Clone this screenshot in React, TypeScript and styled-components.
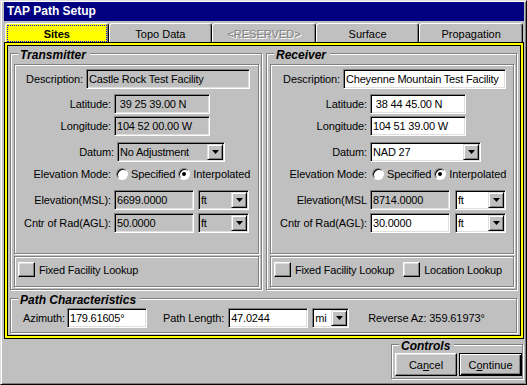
import React from "react"
import styled, { createGlobalStyle } from "styled-components"

const GlobalStyle = createGlobalStyle`
  html, body {
    margin: 0;
    padding: 0;
    background: #c0c0c0;
  }
  body {
    font-family: "Liberation Sans", Arial, sans-serif;
    font-size: 11px;
    color: #000;
  }
  * {
    box-sizing: border-box;
  }
`

const Window = styled.div`
  width: 527px;
  height: 385px;
  display: flex;
  flex-direction: column;
  background: #c0c0c0;
  border: 1px solid;
  border-color: #dfdfdf #000 #000 #dfdfdf;
  box-shadow: inset 1px 1px #fff, inset -1px -1px #808080;
  padding: 1px 2px 1px 3px;
`
const TitleBar = styled.div`
  height: 19px;
  flex: none;
  background: #000080;
  color: #fff;
  font-size: 12px;
  font-weight: bold;
  line-height: 19px;
  padding-left: 3px;
`
const TabStrip = styled.div`
  display: flex;
  height: 19px;
  flex: none;
  margin: 2px 1px 0 1px;
`
const Tab = styled.div<{ $active?: boolean; $disabled?: boolean }>`
  flex: 1;
  display: flex;
  padding: 1px 1px 0 1px;
  background: ${p => (p.$active ? "#ffff00" : "#c0c0c0")};
  border-top: 1px solid #fff;
  border-left: 1px solid #fff;
  border-right: 1px solid #000;
  border-radius: 3px 3px 0 0;
  box-shadow: inset -1px 0 #808080;
  font-weight: ${p => (p.$active ? "bold" : "normal")};
  color: ${p => (p.$disabled ? "#808080" : "#000")};
  text-shadow: ${p => (p.$disabled ? "1px 1px #fff" : "none")};
`
const TabLabel = styled.span<{ $focus?: boolean }>`
  flex: 1;
  display: flex;
  align-items: center;
  justify-content: center;
  border: 1px dotted ${p => (p.$focus ? "#0000ff" : "transparent")};
`
const Frame = styled.div`
  height: 297px;
  flex: none;
  display: flex;
  flex-direction: column;
  border: 1px solid #000;
  box-shadow: inset 0 0 0 2px #ffff00, inset 0 0 0 3px #000;
  padding: 10px 6px 0 5px;
`
const Columns = styled.div`
  display: grid;
  grid-template-columns: 252px 251px;
  column-gap: 4px;
  height: 237px;
`
const Group = styled.div<{ $pad: string; $w?: number; $h?: number; $mt?: number }>`
  display: flex;
  flex-direction: column;
  width: ${p => (p.$w ? `${p.$w}px` : "auto")};
  height: ${p => (p.$h ? `${p.$h}px` : "auto")};
  margin-top: ${p => p.$mt ?? 0}px;
  border: 1px solid #808080;
  box-shadow: inset 1px 1px #fff, 1px 1px #fff;
  padding: ${p => p.$pad};
`
const Legend = styled.div`
  align-self: flex-start;
  height: 13px;
  margin: -5px 0 0 4px;
  padding: 0 4px 0 2px;
  background: #c0c0c0;
  font-size: 12px;
  font-weight: bold;
  font-style: italic;
  line-height: 13px;
`
const Panel = styled.div<{ $h: number; $pad: string }>`
  height: ${p => p.$h}px;
  margin-top: 2px;
  border: 1px solid #808080;
  box-shadow: inset 1px 1px #fff, 1px 1px #fff;
  padding: ${p => p.$pad};
`
const LookupPanel = styled(Panel)`
  display: flex;
  align-items: flex-start;
`
const Row = styled.div<{ $mt?: number; $pl?: number }>`
  display: flex;
  align-items: center;
  height: 20px;
  margin-top: ${p => p.$mt ?? 0}px;
  padding-left: ${p => p.$pl ?? 0}px;
`
const Label = styled.span<{ $w: number; $left?: boolean }>`
  flex: none;
  width: ${p => p.$w}px;
  padding-right: 3px;
  text-align: ${p => (p.$left ? "left" : "right")};
  white-space: nowrap;
  letter-spacing: -0.1px;
`
const Field = styled.div<{ $w: number; $white?: boolean; $ml?: number }>`
  flex: none;
  display: flex;
  align-items: center;
  width: ${p => p.$w}px;
  height: 20px;
  margin-left: ${p => p.$ml ?? 0}px;
  padding: 0 2px;
  background: ${p => (p.$white ? "#fff" : "#c0c0c0")};
  border: 1px solid;
  border-color: #808080 #fff #fff #808080;
  box-shadow: inset 1px 1px #000, inset -1px -1px #dfdfdf;
  white-space: pre;
  letter-spacing: -0.2px;
  overflow: hidden;
`
const SelectBox = styled(Field)`
  justify-content: space-between;
  padding: 1px 1px 1px 2px;
`
const DropButton = styled.span`
  flex: none;
  display: flex;
  align-items: center;
  justify-content: center;
  width: 16px;
  height: 16px;
  background: #c0c0c0;
  border: 1px solid;
  border-color: #dfdfdf #000 #000 #dfdfdf;
  box-shadow: inset 1px 1px #fff, inset -1px -1px #808080;
`
const Radio = styled.span<{ $on?: boolean }>`
  flex: none;
  display: flex;
  align-items: center;
  justify-content: center;
  width: 12px;
  height: 12px;
  margin-left: ${p => (p.$on ? 3 : 2)}px;
  border-radius: 50%;
  background: #fff;
  border: 1px solid;
  border-color: #808080 #fff #fff #808080;
  box-shadow: inset 1px 1px #000;
  &::after {
    content: "";
    width: 4px;
    height: 4px;
    border-radius: 50%;
    background: ${p => (p.$on ? "#000" : "transparent")};
  }
`
const RadioText = styled.span`
  margin-left: 3px;
  white-space: nowrap;
  letter-spacing: -0.1px;
`
const LookupItem = styled.label<{ $ml: number }>`
  display: flex;
  align-items: center;
  margin-left: ${p => p.$ml}px;
  white-space: nowrap;
  letter-spacing: -0.2px;
`
const PushCheck = styled.span`
  flex: none;
  width: 17px;
  height: 15px;
  margin-right: 4px;
  background: #c0c0c0;
  border: 1px solid;
  border-color: #fff #000 #000 #fff;
  box-shadow: inset -1px -1px #808080, inset 1px 1px #dfdfdf;
`
const PlainText = styled.span<{ $ml: number }>`
  margin-left: ${p => p.$ml}px;
  white-space: nowrap;
  letter-spacing: -0.1px;
`
const Footer = styled.div`
  display: flex;
  justify-content: flex-end;
  margin-top: 5px;
  padding-right: 1px;
`
const Buttons = styled.div`
  display: flex;
  gap: 2px;
`
const Button = styled.button<{ $w: number; $default?: boolean }>`
  width: ${p => p.$w}px;
  height: 23px;
  padding: 0;
  font: inherit;
  color: #000;
  background: #c0c0c0;
  border: 1px solid;
  border-color: ${p => (p.$default ? "#000" : "#fff #000 #000 #fff")};
  box-shadow: ${p =>
    p.$default
      ? "inset 1px 1px #fff, inset -1px -1px #000, inset -2px -2px #808080"
      : "inset -1px -1px #808080, inset 1px 1px #dfdfdf"};
`

function Select({ value, w, white, ml }: { value: string; w: number; white?: boolean; ml?: number }) {
  return (
    <SelectBox $w={w} $white={white} $ml={ml}>
      <span>{value}</span>
      <DropButton>
        <svg width="7" height="4" viewBox="0 0 7 4">
          <polygon points="0,0 7,0 3.5,4" fill="#000" />
        </svg>
      </DropButton>
    </SelectBox>
  )
}

type Site = {
  title: string
  white: boolean
  descLw: number
  descW: number
  description: string
  latitude: string
  longitude: string
  datum: string
  datumLw: number
  datumW: number
  elevLabel: string
  elevation: string
  radius: string
  unitGap: number
  lookups: string[]
}

const sites: Site[] = [
  {
    title: "Transmitter",
    white: false,
    descLw: 71,
    descW: 164,
    description: "Castle Rock Test Facility",
    latitude: " 39 25 39.00 N",
    longitude: "104 52 00.00 W",
    datum: "No Adjustment",
    datumLw: 102,
    datumW: 108,
    elevLabel: "Elevation(MSL):",
    elevation: "6699.0000",
    radius: "50.0000",
    unitGap: 4,
    lookups: ["Fixed Facility Lookup"],
  },
  {
    title: "Receiver",
    white: true,
    descLw: 72,
    descW: 163,
    description: "Cheyenne Mountain Test Facility",
    latitude: " 38 44 45.00 N",
    longitude: "104 51 39.00 W",
    datum: "NAD 27",
    datumLw: 99,
    datumW: 111,
    elevLabel: "Elevation(MSL",
    elevation: "8714.0000",
    radius: "30.0000",
    unitGap: 5,
    lookups: ["Fixed Facility Lookup", "Location Lookup"],
  },
]

function SiteGroup({ site }: { site: Site }) {
  return (
    <Group $pad="0 2px 2px 3px">
      <Legend>{site.title}</Legend>
      <Panel $h={190} $pad="4px 0 0 0">
        <Row>
          <Label $w={site.descLw}>Description:</Label>
          <Field $w={site.descW} $white={site.white}>{site.description}</Field>
        </Row>
        <Row $mt={5}>
          <Label $w={99}>Latitude:</Label>
          <Field $w={96} $white={site.white}>{site.latitude}</Field>
        </Row>
        <Row $mt={2}>
          <Label $w={99}>Longitude:</Label>
          <Field $w={96} $white={site.white}>{site.longitude}</Field>
        </Row>
        <Row $mt={6}>
          <Label $w={site.datumLw}>Datum:</Label>
          <Select value={site.datum} w={site.datumW} white={site.white} />
        </Row>
        <Row $mt={2}>
          <Label $w={99}>Elevation Mode:</Label>
          <Radio />
          <RadioText>Specified</RadioText>
          <Radio $on />
          <RadioText>Interpolated</RadioText>
        </Row>
        <Row $mt={6}>
          <Label $w={99}>{site.elevLabel}</Label>
          <Field $w={80}>{site.elevation}</Field>
          <Select value="ft" w={51} white={site.white} ml={site.unitGap} />
        </Row>
        <Row $mt={3}>
          <Label $w={99}>Cntr of Rad(AGL):</Label>
          <Field $w={80} $white={site.white}>{site.radius}</Field>
          <Select value="ft" w={51} white={site.white} ml={site.unitGap} />
        </Row>
      </Panel>
      <LookupPanel $h={31} $pad="5px 0 0 3px">
        {site.lookups.map((l, i) => (
          <LookupItem key={l} $ml={i === 0 ? 0 : 9}>
            <PushCheck />
            {l}
          </LookupItem>
        ))}
      </LookupPanel>
    </Group>
  )
}

export default function App() {
  return (
    <Window>
      <GlobalStyle />
      <TitleBar>TAP Path Setup</TitleBar>
      <TabStrip>
        <Tab $active>
          <TabLabel $focus>Sites</TabLabel>
        </Tab>
        <Tab>
          <TabLabel>Topo Data</TabLabel>
        </Tab>
        <Tab $disabled>
          <TabLabel>&lt;RESERVED&gt;</TabLabel>
        </Tab>
        <Tab>
          <TabLabel>Surface</TabLabel>
        </Tab>
        <Tab>
          <TabLabel>Propagation</TabLabel>
        </Tab>
      </TabStrip>
      <Frame>
        <Columns>
          {sites.map(s => (
            <SiteGroup key={s.title} site={s} />
          ))}
        </Columns>
        <Group $pad="0 0 4px 3px" $h={35} $mt={8}>
          <Legend>Path Characteristics</Legend>
          <Row $mt={1} $pl={9}>
            <Label $w={44} $left>Azimuth:</Label>
            <Field $w={80} $white>179.61605°</Field>
            <PlainText $ml={16}>Path Length:</PlainText>
            <Field $w={80} $white $ml={4}>47.0244</Field>
            <Select value="mi" w={37} white ml={4} />
            <PlainText $ml={19}>Reverse Az: 359.61973°</PlainText>
          </Row>
        </Group>
      </Frame>
      <Footer>
        <Group $pad="0 0 1px 3px" $w={132} $h={35}>
          <Legend>Controls</Legend>
          <Buttons>
            <Button $w={62}>
              Ca<u>n</u>cel
            </Button>
            <Button $w={63} $default>
              C<u>o</u>ntinue
            </Button>
          </Buttons>
        </Group>
      </Footer>
    </Window>
  )
}
